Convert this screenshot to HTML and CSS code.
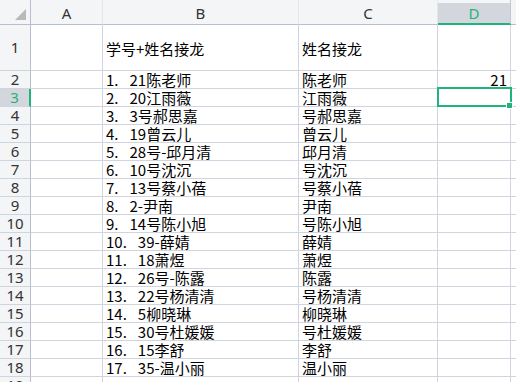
FILE: index.html
```html
<!DOCTYPE html>
<html lang="zh">
<head>
  <meta charset="UTF-8" />
  <title>学号+姓名接龙</title>
  <link rel="stylesheet" href="styles.css">
</head>
<body>
  <div class="sheet">
    <div class="corner"><span class="tri"></span></div>
    <div class="colh">A</div>
    <div class="colh">B</div>
    <div class="colh">C</div>
    <div class="colh active">D</div>
    <div class="colh last"></div>

    <div class="rowh">1</div>
    <div class="cell"></div>
    <div class="cell mid">学号+姓名接龙</div>
    <div class="cell mid">姓名接龙</div>
    <div class="cell"></div>
    <div class="cell last"></div>

    <div class="rowh">2</div>
    <div class="cell"></div>
    <div class="cell"><span class="n">1.</span>21陈老师</div>
    <div class="cell">陈老师</div>
    <div class="cell num">21</div>
    <div class="cell last"></div>

    <div class="rowh active">3</div>
    <div class="cell"></div>
    <div class="cell"><span class="n">2.</span>20江雨薇</div>
    <div class="cell">江雨薇</div>
    <div class="cell sel"><span class="handle"></span></div>
    <div class="cell last"></div>

    <div class="rowh">4</div>
    <div class="cell"></div>
    <div class="cell"><span class="n">3.</span>3号郝思嘉</div>
    <div class="cell">号郝思嘉</div>
    <div class="cell"></div>
    <div class="cell last"></div>

    <div class="rowh">5</div>
    <div class="cell"></div>
    <div class="cell"><span class="n">4.</span>19曾云儿</div>
    <div class="cell">曾云儿</div>
    <div class="cell"></div>
    <div class="cell last"></div>

    <div class="rowh">6</div>
    <div class="cell"></div>
    <div class="cell"><span class="n">5.</span>28号-邱月清</div>
    <div class="cell">邱月清</div>
    <div class="cell"></div>
    <div class="cell last"></div>

    <div class="rowh">7</div>
    <div class="cell"></div>
    <div class="cell"><span class="n">6.</span>10号沈沉</div>
    <div class="cell">号沈沉</div>
    <div class="cell"></div>
    <div class="cell last"></div>

    <div class="rowh">8</div>
    <div class="cell"></div>
    <div class="cell"><span class="n">7.</span>13号蔡小蓓</div>
    <div class="cell">号蔡小蓓</div>
    <div class="cell"></div>
    <div class="cell last"></div>

    <div class="rowh">9</div>
    <div class="cell"></div>
    <div class="cell"><span class="n">8.</span>2-尹南</div>
    <div class="cell">尹南</div>
    <div class="cell"></div>
    <div class="cell last"></div>

    <div class="rowh">10</div>
    <div class="cell"></div>
    <div class="cell"><span class="n">9.</span>14号陈小旭</div>
    <div class="cell">号陈小旭</div>
    <div class="cell"></div>
    <div class="cell last"></div>

    <div class="rowh">11</div>
    <div class="cell"></div>
    <div class="cell"><span class="n">10.</span>39-薛婧</div>
    <div class="cell">薛婧</div>
    <div class="cell"></div>
    <div class="cell last"></div>

    <div class="rowh">12</div>
    <div class="cell"></div>
    <div class="cell"><span class="n">11.</span>18萧煜</div>
    <div class="cell">萧煜</div>
    <div class="cell"></div>
    <div class="cell last"></div>

    <div class="rowh">13</div>
    <div class="cell"></div>
    <div class="cell"><span class="n">12.</span>26号-陈露</div>
    <div class="cell">陈露</div>
    <div class="cell"></div>
    <div class="cell last"></div>

    <div class="rowh">14</div>
    <div class="cell"></div>
    <div class="cell"><span class="n">13.</span>22号杨清清</div>
    <div class="cell">号杨清清</div>
    <div class="cell"></div>
    <div class="cell last"></div>

    <div class="rowh">15</div>
    <div class="cell"></div>
    <div class="cell"><span class="n">14.</span>5柳晓琳</div>
    <div class="cell">柳晓琳</div>
    <div class="cell"></div>
    <div class="cell last"></div>

    <div class="rowh">16</div>
    <div class="cell"></div>
    <div class="cell"><span class="n">15.</span>30号杜媛媛</div>
    <div class="cell">号杜媛媛</div>
    <div class="cell"></div>
    <div class="cell last"></div>

    <div class="rowh">17</div>
    <div class="cell"></div>
    <div class="cell"><span class="n">16.</span>15李舒</div>
    <div class="cell">李舒</div>
    <div class="cell"></div>
    <div class="cell last"></div>

    <div class="rowh">18</div>
    <div class="cell"></div>
    <div class="cell"><span class="n">17.</span>35-温小丽</div>
    <div class="cell">温小丽</div>
    <div class="cell"></div>
    <div class="cell last"></div>

    <div class="rowh">19</div>
    <div class="cell"></div>
    <div class="cell"></div>
    <div class="cell"></div>
    <div class="cell"></div>
    <div class="cell last"></div>
  </div>
</body>
</html>
```

FILE: styles.css
```css
html, body {
  margin: 0;
  background: #fff;
  overflow: hidden;
}
.sheet {
  display: grid;
  grid-template-columns: 31px 72px 196px 139px 73px 1fr;
  grid-template-rows: 25px 46px repeat(18, 18px);
  width: 516px;
  font-family: "Noto Sans CJK SC", sans-serif;
  font-size: 15px;
  color: #000;
}
.sheet > div {
  box-sizing: border-box;
  border-right: 1px solid #d0d4df;
  border-bottom: 1px solid #d0d4df;
}
.corner, .colh {
  background: #f4f5f7;
  border-bottom-color: #b7bfcf !important;
}
.corner {
  position: relative;
  border-right-color: #b7bfcf !important;
}
.tri {
  position: absolute;
  left: 15px;
  top: 9px;
  width: 0;
  height: 0;
  border-left: 11px solid transparent;
  border-bottom: 11px solid #b9b9b9;
}
.colh {
  display: flex;
  align-items: center;
  justify-content: center;
  font-family: "Noto Sans", sans-serif;
  font-size: 15px;
  color: #333;
  border-right-color: #e3e6ec !important;
  padding-top: 2px;
}
.colh.active {
  background: linear-gradient(#f4f5f7 0 3px, #d3d6dc 3px);
  color: #1fb47a;
  border-bottom: 2px solid #1fb47a !important;
  border-right-color: #c2c7d3 !important;
  padding-top: 3px;
}
.rowh {
  background: #f4f5f7;
  border-right-color: #b7bfcf !important;
  display: flex;
  align-items: center;
  justify-content: center;
  font-family: "Noto Sans", sans-serif;
  font-size: 15px;
  color: #333;
  line-height: 1;
}
.rowh.active {
  background: #d3d6dc;
  color: #1fb47a;
  border-right: 2px solid #1fb47a !important;
}
.cell {
  padding: 0 3px;
  line-height: 17px;
  white-space: pre;
}
.cell.mid {
  display: flex;
  align-items: center;
  padding-top: 2px;
}
.cell.num {
  text-align: right;
}
.cell.last {
  border-right: none !important;
}
.n {
  margin-right: 11px;
}
.sel {
  position: relative;
}
.sel::before {
  content: "";
  position: absolute;
  left: -1px;
  top: -2px;
  right: -2px;
  bottom: -1px;
  border: 2px solid #1fb47a;
}
.handle {
  position: absolute;
  right: -3px;
  bottom: -3px;
  width: 5px;
  height: 5px;
  background: #1fb47a;
  border: 1px solid #fff;
}
```
